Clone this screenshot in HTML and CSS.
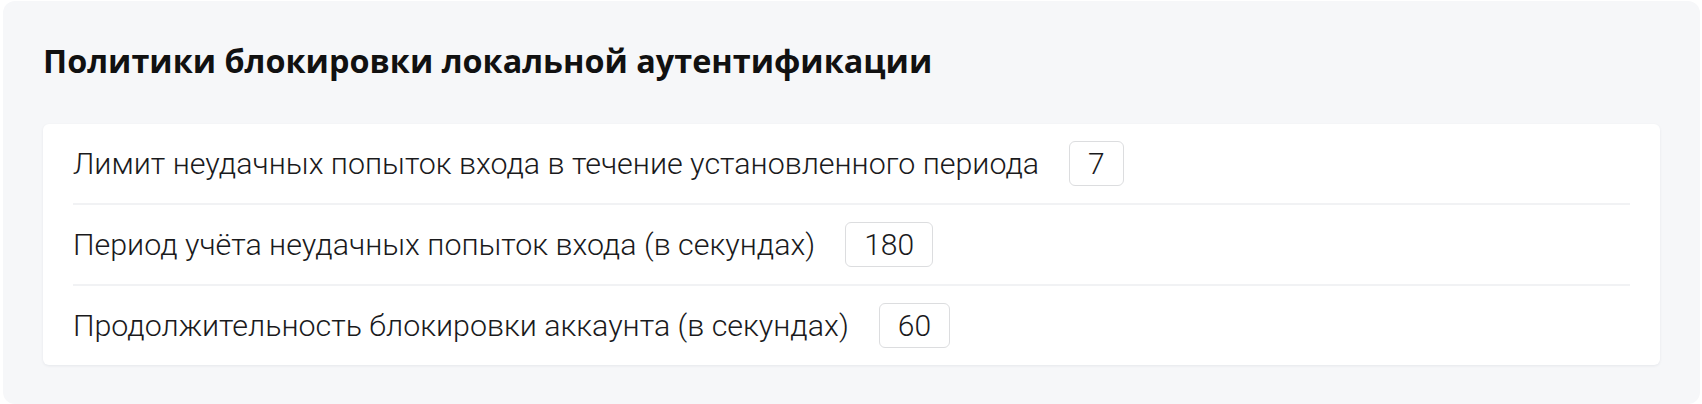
FILE: index.html
```html
<!DOCTYPE html>
<html lang="ru">
<head>
<meta charset="utf-8">
<title>Политики блокировки</title>
<link rel="stylesheet" href="styles.css">
</head>
<body>
<section class="panel">
  <h2 class="panel-title">Политики блокировки локальной аутентификации</h2>
  <div class="card">
    <div class="setting">
      <span class="setting-label">Лимит неудачных попыток входа в течение установленного периода</span>
      <span class="value-box">7</span>
    </div>
    <div class="setting">
      <span class="setting-label">Период учёта неудачных попыток входа (в секундах)</span>
      <span class="value-box">180</span>
    </div>
    <div class="setting">
      <span class="setting-label">Продолжительность блокировки аккаунта (в секундах)</span>
      <span class="value-box">60</span>
    </div>
  </div>
</section>
</body>
</html>
```
FILE: styles.css
```css
* { box-sizing: border-box; }

body {
  margin: 0;
  background: #ffffff;
  font-family: Roboto, "Noto Sans", sans-serif;
  color: #1a1a1c;
}

.panel {
  margin: 1px 2px 0 3px;
  min-height: 403px;
  padding: 38px 40px 0 40px;
  background: #f6f7f9;
  border-radius: 12px;
}

.panel-title {
  margin: 0 0 42px;
  font-family: "Open Sans", sans-serif;
  font-weight: 700;
  font-size: 32.4px;
  line-height: 43px;
  color: #111111;
}

.card {
  background: #ffffff;
  border-radius: 6px;
  padding: 0 30px;
  box-shadow: 0 1px 3px rgba(20, 30, 50, 0.07);
}

.setting {
  display: flex;
  align-items: center;
  gap: 30px;
  padding: 17px 0;
}

.setting + .setting {
  border-top: 2px solid #f1f2f4;
}

.setting-label {
  font-size: 30.4px;
  font-weight: 300;
  white-space: nowrap;
}

.value-box {
  display: inline-flex;
  align-items: center;
  height: 45px;
  padding: 0 18px;
  border: 1.5px solid #dcdddf;
  border-radius: 6px;
  font-size: 30px;
  font-weight: 300;
}
```
